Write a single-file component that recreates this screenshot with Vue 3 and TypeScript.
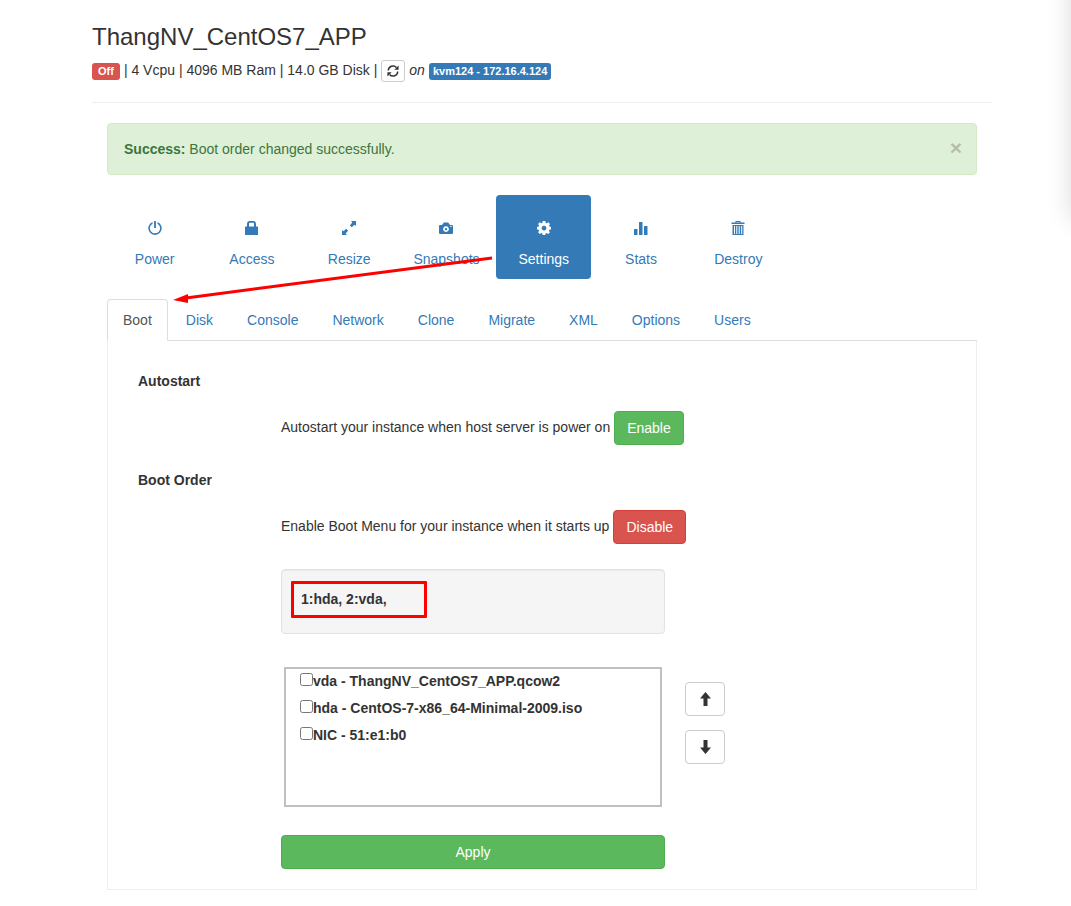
<script setup lang="ts">
import { ref } from 'vue'

interface Action {
  label: string
  icon: string
  rule?: 'evenodd'
}
interface BootDevice {
  id: string
  text: string
  checked: boolean
}

const actions: Action[] = [
  { label: 'Power', icon: 'M6.100 0h1.800v7H6.100zM4.500 1v1.800A5.100 5.100 0 1 0 9.500 2.800V1A6.700 6.700 0 1 1 4.500 1z' },
  { label: 'Access', icon: 'M.5 5.500H2V3Q2 0 4.800 0h3.400Q11 0 11 3v2.500h1.500q.5 0 .5.500V14H0V6q0-.500.500-.500zM4 5.500h5V3Q9 1.800 8 1.800H5Q4 1.800 4 3z', rule: 'evenodd' },
  { label: 'Resize', icon: 'M9 0H14v5L12.500 3.700 9.700 6.200 7.900 4.400 10.300 1.500zM0 14V9l1.500 1.300 2.700-2.500 1.900 1.900-2.500 2.800L5 14z' },
  { label: 'Snapshots', icon: 'M0 5Q0 4 1 4h2L4.800 1.500h4.400L11 4h2q1 0 1 1V12q0 1-1 1H1q-1 0-1-1zM7 5.200a2.900 2.900 0 1 0 .01 0zM7 6.900a1.200 1.200 0 1 1-.01 0zM11.200 5v1h1.400V5z', rule: 'evenodd' },
  { label: 'Settings', icon: 'M5.700 0h2.600l.4 1.900 1 .4L11.300 1.300l1.700 1.800-1 1.500.4 1 1.600.3v2.500l-1.700.4-.4 1 1 1.600-1.800 1.700-1.500-1-1 .4L8.200 14H5.700l-.4-1.600-1-.4-1.500 1-1.700-1.700 1-1.600-.4-1L0 8.400V5.900l1.700-.4.4-1-1-1.500 1.700-1.700 1.500 1 1-.4zM7 4.700a2.400 2.400 0 1 0 .01 0z', rule: 'evenodd' },
  { label: 'Stats', icon: 'M0 8.500Q0 8 .5 8h2.500q.5 0 .5.5V14H0zM5 1.500Q5 1 5.500 1h2.500q.5 0 .5.5V14H5zM10 5.500q0-.5.5-.5H13q.5 0 .5.5V14H10z' },
  { label: 'Destroy', icon: 'M4.500 0h5v1.500H13.500V3H.5V1.500h4zM5.500 1v.5h3V1zM1.500 4h11v10h-11zM3 5v8h1V5zM5.300 5v8h1V5zM7.700 5v8h1V5zM10.200 5v8h1V5z', rule: 'evenodd' },
]
const activeAction = ref('Settings')

const tabs = ['Boot', 'Disk', 'Console', 'Network', 'Clone', 'Migrate', 'XML', 'Options', 'Users']
const activeTab = ref('Boot')

const alertOpen = ref(true)

const devices = ref<BootDevice[]>([
  { id: 'vda', text: 'vda - ThangNV_CentOS7_APP.qcow2', checked: false },
  { id: 'hda', text: 'hda - CentOS-7-x86_64-Minimal-2009.iso', checked: false },
  { id: 'nic', text: 'NIC - 51:e1:b0', checked: false },
])

function move(step: 1 | -1) {
  const list = devices.value
  const from = list.findIndex((d) => d.checked)
  const to = from + step
  if (from < 0 || to < 0 || to >= list.length) return
  const [item] = list.splice(from, 1)
  list.splice(to, 0, item)
}
</script>

<template>
  <div class="page">
    <div class="edge-shadow" aria-hidden="true"></div>
    <header class="header">
      <h3>ThangNV_CentOS7_APP</h3>
      <div class="summary">
        <span class="tag danger">Off</span>
        <span class="specs">| 4 Vcpu | 4096 MB Ram | 14.0 GB Disk |</span>
        <button class="refresh" type="button" aria-label="Refresh">
          <svg viewBox="0 0 14 14" width="12" height="12">
            <path d="M1.500 6.500A5.400 5.400 0 0 1 11 3M12.500 7.500A5.400 5.400 0 0 1 3 11" fill="none" stroke="currentColor" stroke-width="1.700" />
            <path d="M13.500.500v5H8.500zM.500 13.500v-5H5.500z" fill="currentColor" />
          </svg>
        </button>
        <em class="specs">on</em>
        <a class="tag primary" href="#">kvm124 - 172.16.4.124</a>
      </div>
    </header>

    <main class="body">
      <div v-if="alertOpen" class="alert" role="alert">
        <span><strong>Success:</strong> Boot order changed successfully.</span>
        <button type="button" class="close" aria-label="Close" @click="alertOpen = false">×</button>
      </div>

      <nav class="actions" aria-label="Instance actions">
        <a
          v-for="a in actions"
          :key="a.label"
          href="#"
          class="action"
          :class="{ active: a.label === activeAction }"
          @click.prevent="activeAction = a.label"
        >
          <svg viewBox="0 0 14 14" width="14" height="14" aria-hidden="true">
            <path :d="a.icon" :fill-rule="a.rule" fill="currentColor" />
          </svg>
          <span>{{ a.label }}</span>
        </a>
        <svg class="pointer" viewBox="0 0 322 50" width="322" height="50" aria-hidden="true">
          <path d="M319 4L13 44" stroke="#f00" stroke-width="3" fill="none" />
          <path d="M0 46L15 40V49z" fill="#f00" />
        </svg>
      </nav>

      <nav class="tabs" aria-label="Settings sections">
        <a
          v-for="t in tabs"
          :key="t"
          href="#"
          class="tab"
          :class="{ active: t === activeTab }"
          @click.prevent="activeTab = t"
        >{{ t }}</a>
      </nav>

      <section class="panel">
        <h4>Autostart</h4>
        <div class="setting">
          <span>Autostart your instance when host server is power on</span>
          <button class="btn success" type="button">Enable</button>
        </div>

        <h4>Boot Order</h4>
        <div class="setting">
          <span>Enable Boot Menu for your instance when it starts up</span>
          <button class="btn danger" type="button">Disable</button>
        </div>

        <form class="order" @submit.prevent>
          <div class="well"><strong class="highlight">1:hda, 2:vda,</strong></div>
          <div class="picker">
            <div class="devices">
              <label v-for="d in devices" :key="d.id" class="device">
                <input v-model="d.checked" type="checkbox" />
                <span>{{ d.text }}</span>
              </label>
            </div>
            <div class="movers">
              <button class="btn plain" type="button" aria-label="Move up" @click="move(-1)">
                <svg viewBox="0 0 14 14" width="14" height="14">
                  <path d="M7.500 0l5.500 6.500H9.500V14h-4V6.500H2z" fill="currentColor" />
                </svg>
              </button>
              <button class="btn plain" type="button" aria-label="Move down" @click="move(1)">
                <svg viewBox="0 0 14 14" width="14" height="14">
                  <path d="M7.500 14l5.500-6.500H9.500V0h-4v7.500H2z" fill="currentColor" />
                </svg>
              </button>
            </div>
          </div>
          <button class="btn success apply" type="submit">Apply</button>
        </form>
      </section>
    </main>
  </div>
</template>

<style>
body {
  margin: 0;
  background: #fff;
}
</style>

<style scoped>
.page {
  position: relative;
  overflow: hidden;
  box-sizing: border-box;
  padding: 24px 79px 16px 92px;
  color: #333;
  font: 14px/20px 'Liberation Sans', Arial, sans-serif;
}
.page *,
.page *::before {
  box-sizing: border-box;
}
.edge-shadow {
  position: absolute;
  top: -40px;
  right: -40px;
  width: 40px;
  height: 260px;
  box-shadow: 0 0 25px rgba(0, 0, 0, 0.15);
}
a {
  color: #337ab7;
  text-decoration: none;
}
button {
  font: inherit;
  cursor: pointer;
}
.header {
  padding-bottom: 20px;
  border-bottom: 1px solid #eee;
}
h3 {
  margin: 0 0 10px;
  font-size: 24px;
  line-height: 26px;
  font-weight: 400;
}
.summary {
  display: flex;
  align-items: center;
  gap: 4px;
  height: 22px;
}
.specs {
  padding-bottom: 2px;
}
.tag {
  padding: 0 6px;
  border-radius: 3px;
  color: #fff;
  font-size: 11px;
  line-height: 17px;
  font-weight: 700;
  margin-top: 1px;
}
.tag.danger {
  background: #d9534f;
}
.tag.primary {
  padding: 0 4px;
  background: #337ab7;
}
.refresh {
  display: flex;
  align-items: center;
  justify-content: center;
  width: 24px;
  height: 22px;
  padding: 0;
  border: 1px solid #ccc;
  border-radius: 3px;
  background: #fff;
  color: #333;
}
.body {
  padding: 20px 15px 0;
}
.alert {
  display: flex;
  align-items: center;
  justify-content: space-between;
  margin-bottom: 20px;
  padding: 15px 14px 15px 16px;
  border: 1px solid #d6e9c6;
  border-radius: 4px;
  background: #dff0d8;
  color: #3c763d;
}
.close {
  padding: 0 0 2px;
  border: 0;
  background: none;
  color: #000;
  font-size: 21px;
  line-height: 18px;
  font-weight: 700;
  opacity: 0.2;
}
.actions {
  position: relative;
  display: grid;
  grid-template-columns: repeat(7, 1fr);
  gap: 2px;
  max-width: 679px;
  margin-bottom: 20px;
}
.action {
  display: flex;
  flex-direction: column;
  align-items: center;
  gap: 14px;
  padding: 26px 0 10px;
  border-radius: 4px;
}
.action.active {
  background: #337ab7;
  color: #fff;
}
.pointer {
  position: absolute;
  left: 66px;
  top: 59px;
  pointer-events: none;
}
.tabs {
  display: flex;
  gap: 2px;
  border-bottom: 1px solid #ddd;
}
.tab {
  margin-bottom: -1px;
  padding: 10px 15px;
  border: 1px solid transparent;
  border-radius: 4px 4px 0 0;
}
.tab.active {
  border-color: #ddd #ddd #fff;
  background: #fff;
  color: #555;
}
.panel {
  padding: 30px 30px 20px;
  border: 1px solid #eee;
  border-top: 0;
}
h4 {
  margin: 0 0 20px;
  font-size: 14px;
  line-height: 20px;
}
.setting {
  display: flex;
  align-items: center;
  gap: 4px;
  margin: 0 0 25px 143px;
}
.setting span {
  padding-bottom: 2px;
}
.btn {
  height: 34px;
  padding: 0 12px;
  border: 1px solid;
  border-radius: 4px;
  color: #fff;
}
.btn.success {
  border-color: #4cae4c;
  background: #5cb85c;
}
.btn.danger {
  border-color: #d43f3a;
  background: #d9534f;
}
.btn.plain {
  display: flex;
  align-items: center;
  border-color: #ccc;
  background: #fff;
  color: #333;
}
.order {
  margin-left: 143px;
}
.well {
  max-width: 384px;
  min-height: 65px;
  margin-bottom: 33px;
  padding: 11px 9px;
  border: 1px solid #e3e3e3;
  border-radius: 4px;
  background: #f5f5f5;
  box-shadow: inset 0 1px 1px rgba(0, 0, 0, 0.05);
}
.highlight {
  display: block;
  width: 136px;
  padding: 5px 7px 6px;
  border: 3px solid #f00;
  border-radius: 1px;
}
.picker {
  display: flex;
  gap: 23px;
  margin: 0 0 28px 3px;
}
.devices {
  flex: 0 1 378px;
  height: 140px;
  padding: 2px 14px;
  border: 2px solid #c0c0c0;
}
.device {
  display: flex;
  margin-bottom: 7px;
  font-weight: 700;
}
.device input {
  width: 13px;
  height: 13px;
  margin: 2px 0 0;
}
.movers {
  display: flex;
  flex-direction: column;
  gap: 14px;
  padding-top: 15px;
}
.apply {
  width: 100%;
  max-width: 384px;
}
</style>
